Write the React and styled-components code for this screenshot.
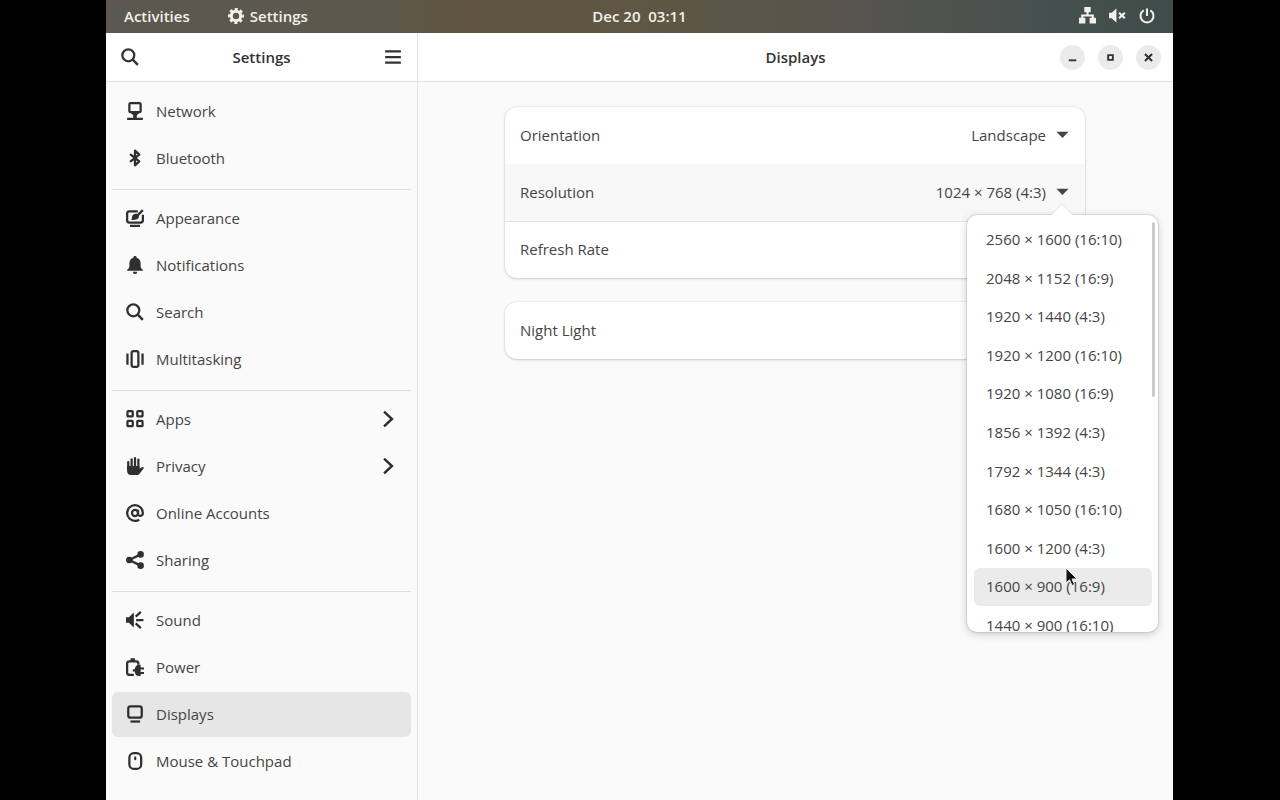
import React from 'react';
import styled, { createGlobalStyle } from 'styled-components';

const GlobalStyle = createGlobalStyle`
  *, *::before, *::after { box-sizing: border-box; }
  body {
    margin: 0;
    background: #000;
    color: #454545;
    font-family: "Open Sans", "Noto Sans", sans-serif;
    font-size: 15px;
    line-height: 20px;
  }
  button, select { font: inherit; color: inherit; }
  h1, h2, ul { margin: 0; padding: 0; }
  ul { list-style: none; }
`;

const Screen = styled.div`
  min-height: 100vh;
  margin: 0 107px 0 106px;
  display: flex;
  flex-direction: column;
  background: #fafafa;
`;

const TopBar = styled.header`
  height: 33px;
  padding: 0 18px 2px;
  display: grid;
  grid-template-columns: 1fr auto 1fr;
  align-items: center;
  background: linear-gradient(90deg, #5a5850 0%, #5c584e 24%, #60563f 34%, #5f5744 50%, #5b564b 62%, #53534f 74%, #46514f 88%, #3e4c4a 100%);
  color: #f3f0ea;
`;

const BarGroup = styled.div`
  display: flex;
  align-items: center;
  justify-content: ${(p) => (p.$end ? 'flex-end' : 'flex-start')};
  gap: ${(p) => (p.$end ? '13px' : '38px')};
`;

const BarButton = styled.button`
  display: flex;
  align-items: center;
  gap: 6px;
  padding: 0;
  border: 0;
  background: none;
  font-weight: 600;
  font-size: 15px;
  white-space: pre;
`;

const Window = styled.div`
  flex: 1;
  display: grid;
  grid-template-columns: 312px 1fr;
`;

const Sidebar = styled.aside`
  border-right: 1px solid #e3e3e3;
`;

const HeaderBar = styled.header`
  height: 49px;
  padding: 0 12px;
  display: grid;
  grid-template-columns: 1fr auto 1fr;
  align-items: center;
  background: #fff;
  border-bottom: 1px solid #e2e2e2;
  color: #333;
`;

const Title = styled.h1`
  grid-column: 2;
  font-size: 15px;
  line-height: 20px;
  font-weight: 600;
`;

const FlatButton = styled.button`
  justify-self: ${(p) => (p.$end ? 'end' : 'start')};
  display: flex;
  padding: 3px;
  border: 0;
  background: none;
`;

const WindowControls = styled.div`
  justify-self: end;
  display: flex;
  gap: 13px;
`;

const RoundButton = styled.button`
  width: 25px;
  height: 25px;
  padding: 0;
  border: 0;
  border-radius: 50%;
  display: grid;
  place-items: center;
  background: #ebebeb;
`;

const Nav = styled.nav`
  padding: 7px 6px;
`;

const NavGroup = styled.ul`
  display: flex;
  flex-direction: column;
  gap: 2px;

  & + & {
    margin-top: 8px;
    padding-top: 6px;
    border-top: 1px solid #dfdfdf;
  }
`;

const NavLink = styled.a`
  height: 45px;
  padding: 0 14px 2px;
  display: flex;
  align-items: center;
  gap: 12px;
  border-radius: 6px;
  color: inherit;
  text-decoration: none;
  background: ${(p) => (p.$active ? '#e6e6e6' : 'transparent')};
`;

const NavText = styled.span`
  flex: 1;
`;

const Panel = styled.main``;

const Content = styled.div`
  padding: 25px 88px 25px 87px;
  display: flex;
  flex-direction: column;
  gap: 24px;
`;

const Card = styled.section`
  border-radius: 12px;
  background: #fff;
  box-shadow: 0 0 0 1px rgba(0, 0, 0, 0.04), 0 1px 3px rgba(0, 0, 0, 0.16);
`;

const Row = styled.div`
  position: relative;
  height: 57px;
  padding: 0 14px 2px 15px;
  display: flex;
  align-items: center;
  justify-content: space-between;
  background: ${(p) => (p.$active ? '#f8f8f8' : 'transparent')};
  box-shadow: ${(p) => (p.$active ? '0 1px #e4e4e4' : 'none')};
`;

const SelectWrap = styled.div`
  display: grid;
  align-items: center;

  & > * { grid-area: 1 / 1; }
  & > svg {
    justify-self: end;
    pointer-events: none;
  }
`;

const Select = styled.select`
  appearance: none;
  width: 200px;
  height: 40px;
  padding: 0 25px 0 0;
  border: 0;
  background: none;
  text-align: right;
  text-align-last: right;
`;

const Popover = styled.div`
  position: absolute;
  z-index: 2;
  top: 51px;
  right: -73px;
  width: 191px;
  height: 417px;
  border-radius: 10px;
  background: #fff;
  box-shadow: 0 0 0 1px rgba(0, 0, 0, 0.08), 0 2px 8px rgba(0, 0, 0, 0.2);
`;

const PopoverArrow = styled.svg`
  position: absolute;
  top: -12px;
  right: 84px;
`;

const PopoverScroll = styled.div`
  height: 100%;
  padding: 6px 6px 0 7px;
  overflow: hidden;
  border-radius: 10px;
`;

const OptionList = styled.ul`
  height: 424px;
  display: flex;
  flex-direction: column;
`;

const Option = styled.li`
  position: relative;
  flex: 1;
  padding: 0 12px 2px;
  display: flex;
  align-items: center;
  border-radius: 6px;
  background: ${(p) => (p.$hover ? '#ebebeb' : 'transparent')};
`;

const ScrollThumb = styled.div`
  position: absolute;
  top: 7px;
  right: 3px;
  width: 3px;
  height: 175px;
  border-radius: 2px;
  background: #cbcbcb;
`;

const Pointer = styled.svg`
  position: absolute;
  top: -1px;
  left: 91px;
`;

const line = { fill: 'none', stroke: 'currentColor', strokeWidth: 2 };

const shapes = {
  search: (
    <g {...line}>
      <circle cx="6.5" cy="6.5" r="5.3" />
      <path d="M10.4 10.4 15 15" strokeWidth="2.2" />
    </g>
  ),
  menu: <path {...line} d="M1 3h14M1 8h14M1 13h14" />,
  network: (
    <>
      <rect {...line} x="3" y="1" width="10" height="8" rx="1" />
      <path fill="currentColor" d="M4 9.500h8L9.600 11.800V14H15v2H1v-2h5.400v-2.200z" />
    </>
  ),
  bluetooth: <path {...line} strokeWidth="2" strokeLinejoin="round" d="M3.600 4.600 11.800 11 8 14.500V1.500L11.800 5 3.600 11.400" />,
  appearance: (
    <>
      <path {...line} d="M10.500 2H3a2 2 0 0 0-2 2v6a2 2 0 0 0 2 2h10a2 2 0 0 0 2-2V5" />
      <path fill="currentColor" d="M3.500 14h9v2h-9zM14.300.3l1.400 1.400-4.700 4.800-1.700-1.400zM8.600 4.300c2-.2 3.300 1.200 2.900 2.900-.4 1.900-3 2.900-7 2.500 1-.6.5-1.300.8-2.600.4-1.700 1.600-2.700 3.300-2.800z" />
    </>
  ),
  bell: <path fill="currentColor" d="M8 0a1.400 1.400 0 0 1 1.400 1.600C11.700 2.300 13 4.200 13 6.600V9c0 1.400.6 2.300 2 3.200V13H1v-.8C2.400 11.300 3 10.400 3 9V6.600c0-2.400 1.300-4.300 3.600-5A1.400 1.400 0 0 1 8 0zM6 14h4a2 2 0 0 1-4 0z" />,
  multitask: (
    <g {...line}>
      <rect x="5" y="1" width="6" height="14" rx="1.800" />
      <path d="M1.300 3v10M14.700 3v10" />
    </g>
  ),
  apps: (
    <g {...line}>
      <rect x="1.300" y="1" width="4.700" height="4.700" rx=".7" />
      <rect x="10" y="1" width="4.700" height="4.700" rx=".7" />
      <rect x="1.300" y="9.700" width="4.700" height="4.700" rx=".7" />
      <rect x="10" y="9.700" width="4.700" height="4.700" rx=".7" />
    </g>
  ),
  hand: (
    <>
      <path {...line} strokeLinecap="round" d="M2 4.500V11M5 2v8M8 1v9M11 2.300V10" />
      <path fill="currentColor" d="M1 8h11v2.500L14 9c1-.6 2.200.3 1.600 1.200L12.200 14.600C11.400 15.600 10.600 16 9.400 16H4.500C2.400 16 1 14.700 1 12.500z" />
    </>
  ),
  at: (
    <g {...line}>
      <circle cx="8" cy="8" r="2.700" />
      <path d="M10.700 5v3.700c0 2.600 4.300 2.400 4.300-.7A7 7 0 1 0 8 15c1.600 0 2.700-.3 3.800-1" />
    </g>
  ),
  share: (
    <>
      <path {...line} d="M13 3 3 8l10 5" />
      <g fill="currentColor"><circle cx="3" cy="8" r="2.900" /><circle cx="13" cy="3" r="2.900" /><circle cx="13" cy="13" r="2.900" /></g>
    </>
  ),
  sound: (
    <>
      <path fill="currentColor" d="M0 5.500h2.500L7 1.300v13.400l-4.500-4.200H0z" />
      <path {...line} d="M9 8h6.500M8.600 5l4.600-4.200M8.600 11l4.600 4.200" />
    </>
  ),
  power: (
    <>
      <path {...line} d="M7 15H3.500C2 15 1 14.200 1 13V5c0-1.400.8-2 2-2h6c1.300 0 2 .7 2 2v1" />
      <path fill="currentColor" d="M4 .2h4V3H4zM11.500 6H13v2.500h3v1.700h-3v2.300h3v1.700h-3V16h-1.500C9.400 16 8 14.800 7.800 12H6v-2h1.800C8.200 7.400 9.500 6 11.500 6z" />
    </>
  ),
  display: (
    <>
      <rect {...line} x="2" y="1.300" width="12" height="10" rx="2" />
      <path fill="currentColor" d="M4 13.700h8.500v2H4z" />
    </>
  ),
  mouse: (
    <g {...line}>
      <rect x="3" y="1" width="10.500" height="14" rx="4" />
      <path strokeWidth="1.800" d="M8.200 4v3.200" />
    </g>
  ),
  chevron: <path {...line} strokeWidth="2.200" d="M4.500 1.500 11.500 8l-7 6.500" />,
  gear: (
    <g {...line}>
      <circle cx="8" cy="8" r="4.700" strokeWidth="3" />
      <circle cx="8" cy="8" r="6.700" strokeWidth="2.600" strokeDasharray="3.030 2.230" strokeDashoffset="1.500" />
    </g>
  ),
  wired: <path fill="currentColor" d="M5 0h6v5H9v2h5v3h2v5.500h-6V10h2V9H4v1h2v5.500H0V10h2V7h5V5H5z" />,
  muted: (
    <>
      <path fill="currentColor" d="M0 5.500h2.500L7 1.300v13.400l-4.500-4.200H0z" />
      <path {...line} d="m9.500 5.300 5.400 5.400M14.900 5.300l-5.400 5.400" />
    </>
  ),
  shutdown: <path {...line} d="M8 .5V8M4.700 2.400a6.500 6.500 0 1 0 6.600 0" />,
  minimize: <path fill="currentColor" d="M4 10h8v2H4z" />,
  maximize: <path {...line} d="M5.500 5.500h5v5h-5z" />,
  close: <path {...line} strokeWidth="2.200" d="m4.200 4.200 7.600 7.600M11.800 4.200l-7.600 7.600" />,
  caret: <path fill="currentColor" d="M2.300 5.500h11.400L8 11.200z" />,
};

const Icon = ({ name, size = 17 }) => (
  <svg width={size} height={size} viewBox="0 0 16 16" aria-hidden="true">
    {shapes[name]}
  </svg>
);

const DarkIcon = styled.span`
  display: flex;
  color: #2f2f2f;
`;

const groups = [
  [['Network', 'network'], ['Bluetooth', 'bluetooth']],
  [['Appearance', 'appearance'], ['Notifications', 'bell'], ['Search', 'search'], ['Multitasking', 'multitask']],
  [['Apps', 'apps', true], ['Privacy', 'hand', true], ['Online Accounts', 'at'], ['Sharing', 'share']],
  [['Sound', 'sound'], ['Power', 'power'], ['Displays', 'display'], ['Mouse & Touchpad', 'mouse']],
];

const resolutions = [
  '2560 × 1600 (16:10)', '2048 × 1152 (16:9)', '1920 × 1440 (4:3)', '1920 × 1200 (16:10)',
  '1920 × 1080 (16:9)', '1856 × 1392 (4:3)', '1792 × 1344 (4:3)', '1680 × 1050 (16:10)',
  '1600 × 1200 (4:3)', '1600 × 900 (16:9)', '1440 × 900 (16:10)',
];

const NavItem = ({ label, icon, more }) => (
  <li>
    <NavLink
      href={`#${label.toLowerCase().replace(/\W+/g, '-')}`}
      $active={label === 'Displays'}
      aria-current={label === 'Displays' ? 'page' : undefined}
    >
      <DarkIcon><Icon name={icon} size={18} /></DarkIcon>
      <NavText>{label}</NavText>
      {more && <DarkIcon><Icon name="chevron" size={18} /></DarkIcon>}
    </NavLink>
  </li>
);

const ResolutionPopover = () => (
  <Popover>
    <PopoverArrow width="24" height="13" viewBox="0 0 24 13" aria-hidden="true">
      <path d="M0 13 12 1l12 12z" fill="#fff" />
      <path d="M1 12 12 1l11 11" fill="none" stroke="#000" strokeOpacity=".09" />
    </PopoverArrow>
    <PopoverScroll>
      <OptionList role="listbox" aria-label="Resolution">
        {resolutions.map((r) => (
          <Option key={r} role="option" aria-selected="false" $hover={r === '1600 × 900 (16:9)'}>
            {r}
            {r === '1600 × 900 (16:9)' && (
              <Pointer width="13" height="20" viewBox="0 0 13 20" aria-hidden="true">
                <path d="M1 1v15l3.500-3.200L7 18.500l2.500-1.100L7 12h5z" fill="#111" stroke="#eee" strokeWidth="1" />
              </Pointer>
            )}
          </Option>
        ))}
      </OptionList>
    </PopoverScroll>
    <ScrollThumb />
  </Popover>
);

export default function App() {
  return (
    <>
      <GlobalStyle />
      <Screen>
        <TopBar>
          <BarGroup>
            <BarButton>Activities</BarButton>
            <BarButton><Icon name="gear" size={16} />Settings</BarButton>
          </BarGroup>
          <BarButton>{'Dec 20  03:11'}</BarButton>
          <BarGroup $end>
            <BarButton aria-label="Wired network"><Icon name="wired" /></BarButton>
            <BarButton aria-label="Sound muted"><Icon name="muted" /></BarButton>
            <BarButton aria-label="Power"><Icon name="shutdown" size={16} /></BarButton>
          </BarGroup>
        </TopBar>
        <Window>
          <Sidebar>
            <HeaderBar>
              <FlatButton aria-label="Search"><Icon name="search" size={18} /></FlatButton>
              <Title as="h2">Settings</Title>
              <FlatButton $end aria-label="Menu"><Icon name="menu" size={18} /></FlatButton>
            </HeaderBar>
            <Nav aria-label="Settings">
              {groups.map((items) => (
                <NavGroup key={items[0][0]}>
                  {items.map(([label, icon, more]) => (
                    <NavItem key={label} label={label} icon={icon} more={more} />
                  ))}
                </NavGroup>
              ))}
            </Nav>
          </Sidebar>
          <Panel>
            <HeaderBar>
              <Title>Displays</Title>
              <WindowControls>
                <RoundButton aria-label="Minimize"><Icon name="minimize" size={15} /></RoundButton>
                <RoundButton aria-label="Maximize"><Icon name="maximize" size={15} /></RoundButton>
                <RoundButton aria-label="Close"><Icon name="close" size={15} /></RoundButton>
              </WindowControls>
            </HeaderBar>
            <Content>
              <Card>
                <Row>
                  <label htmlFor="orientation">Orientation</label>
                  <SelectWrap>
                    <Select id="orientation"><option>Landscape</option></Select>
                    <Icon name="caret" />
                  </SelectWrap>
                </Row>
                <Row $active>
                  <label htmlFor="resolution">Resolution</label>
                  <SelectWrap>
                    <Select id="resolution"><option>1024 × 768 (4:3)</option></Select>
                    <Icon name="caret" />
                  </SelectWrap>
                  <ResolutionPopover />
                </Row>
                <Row>Refresh Rate</Row>
              </Card>
              <Card>
                <Row>Night Light</Row>
              </Card>
            </Content>
          </Panel>
        </Window>
      </Screen>
    </>
  );
}
